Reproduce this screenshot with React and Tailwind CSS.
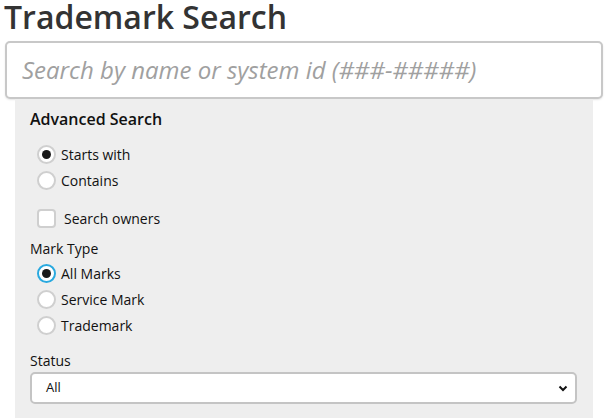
import React from "react";

function Radio({ checked, focus }) {
  return (
    <span
      className={
        "flex h-[19px] w-[19px] items-center justify-center rounded-full border-2 bg-white " +
        (focus ? "border-[#29a9df]" : "border-[#cfcfcf]")
      }
    >
      {checked && <span className="h-[9px] w-[9px] rounded-full bg-[#1a1a1a]" />}
    </span>
  );
}

function RadioRow({ label, checked, focus }) {
  return (
    <div className="flex h-[26px] items-center pl-[7px]">
      <Radio checked={checked} focus={focus} />
      <span className="ml-[5px] text-[14px] text-[#111]">{label}</span>
    </div>
  );
}

export default function App() {
  return (
    <div
      className="h-[418px] w-[609px] overflow-hidden bg-white"
      style={{ fontFamily: '"Open Sans", sans-serif' }}
    >
      <div className="h-[41px] pl-[4px]">
        <h1 className="text-[32px] font-semibold leading-[33px] text-[#333]">
          Trademark Search
        </h1>
      </div>
      <div className="ml-[5px] flex h-[58px] w-[598px] items-center rounded-[5px] border-2 border-[#c8c8c8] bg-white pl-[15px] shadow-[0_1px_2px_rgba(0,0,0,0.1)]">
        <span className="text-[24px] italic leading-[30px] text-[#a0a0a0]">
          Search by name or system id (###-#####)
        </span>
      </div>
      <div className="ml-[15px] h-[400px] w-[578px] bg-[#eeeeee] pl-[15px] pt-[8px]">
        <div className="h-[24px] text-[16px] font-semibold leading-[24px] text-[#111]">
          Advanced Search
        </div>
        <div className="mt-[10px]">
          <RadioRow label="Starts with" checked />
          <RadioRow label="Contains" />
        </div>
        <div className="mt-[12px] flex h-[26px] items-center pl-[7px]">
          <span className="h-[19px] w-[19px] rounded-[4px] border-2 border-[#cfcfcf] bg-white" />
          <span className="ml-[8px] text-[14px] text-[#111]">Search owners</span>
        </div>
        <div className="mt-[8px] h-[20px] text-[14px] leading-[20px] text-[#111]">
          Mark Type
        </div>
        <div className="mt-[1px]">
          <RadioRow label="All Marks" checked focus />
          <RadioRow label="Service Mark" />
          <RadioRow label="Trademark" />
        </div>
        <div className="mt-[13px] h-[20px] text-[14px] leading-[20px] text-[#111]">
          Status
        </div>
        <div className="mt-[1px] flex h-[32px] w-[547px] items-center justify-between rounded-[5px] border-2 border-[#c4c4c4] bg-white pl-[14px] pr-[7px]">
          <span className="text-[13px] text-[#111]">All</span>
          <svg width="10" height="7" viewBox="0 0 10 7">
            <path d="M1.5 1.5 L5 5 L8.5 1.5" fill="none" stroke="#111" strokeWidth="2" />
          </svg>
        </div>
      </div>
    </div>
  );
}
